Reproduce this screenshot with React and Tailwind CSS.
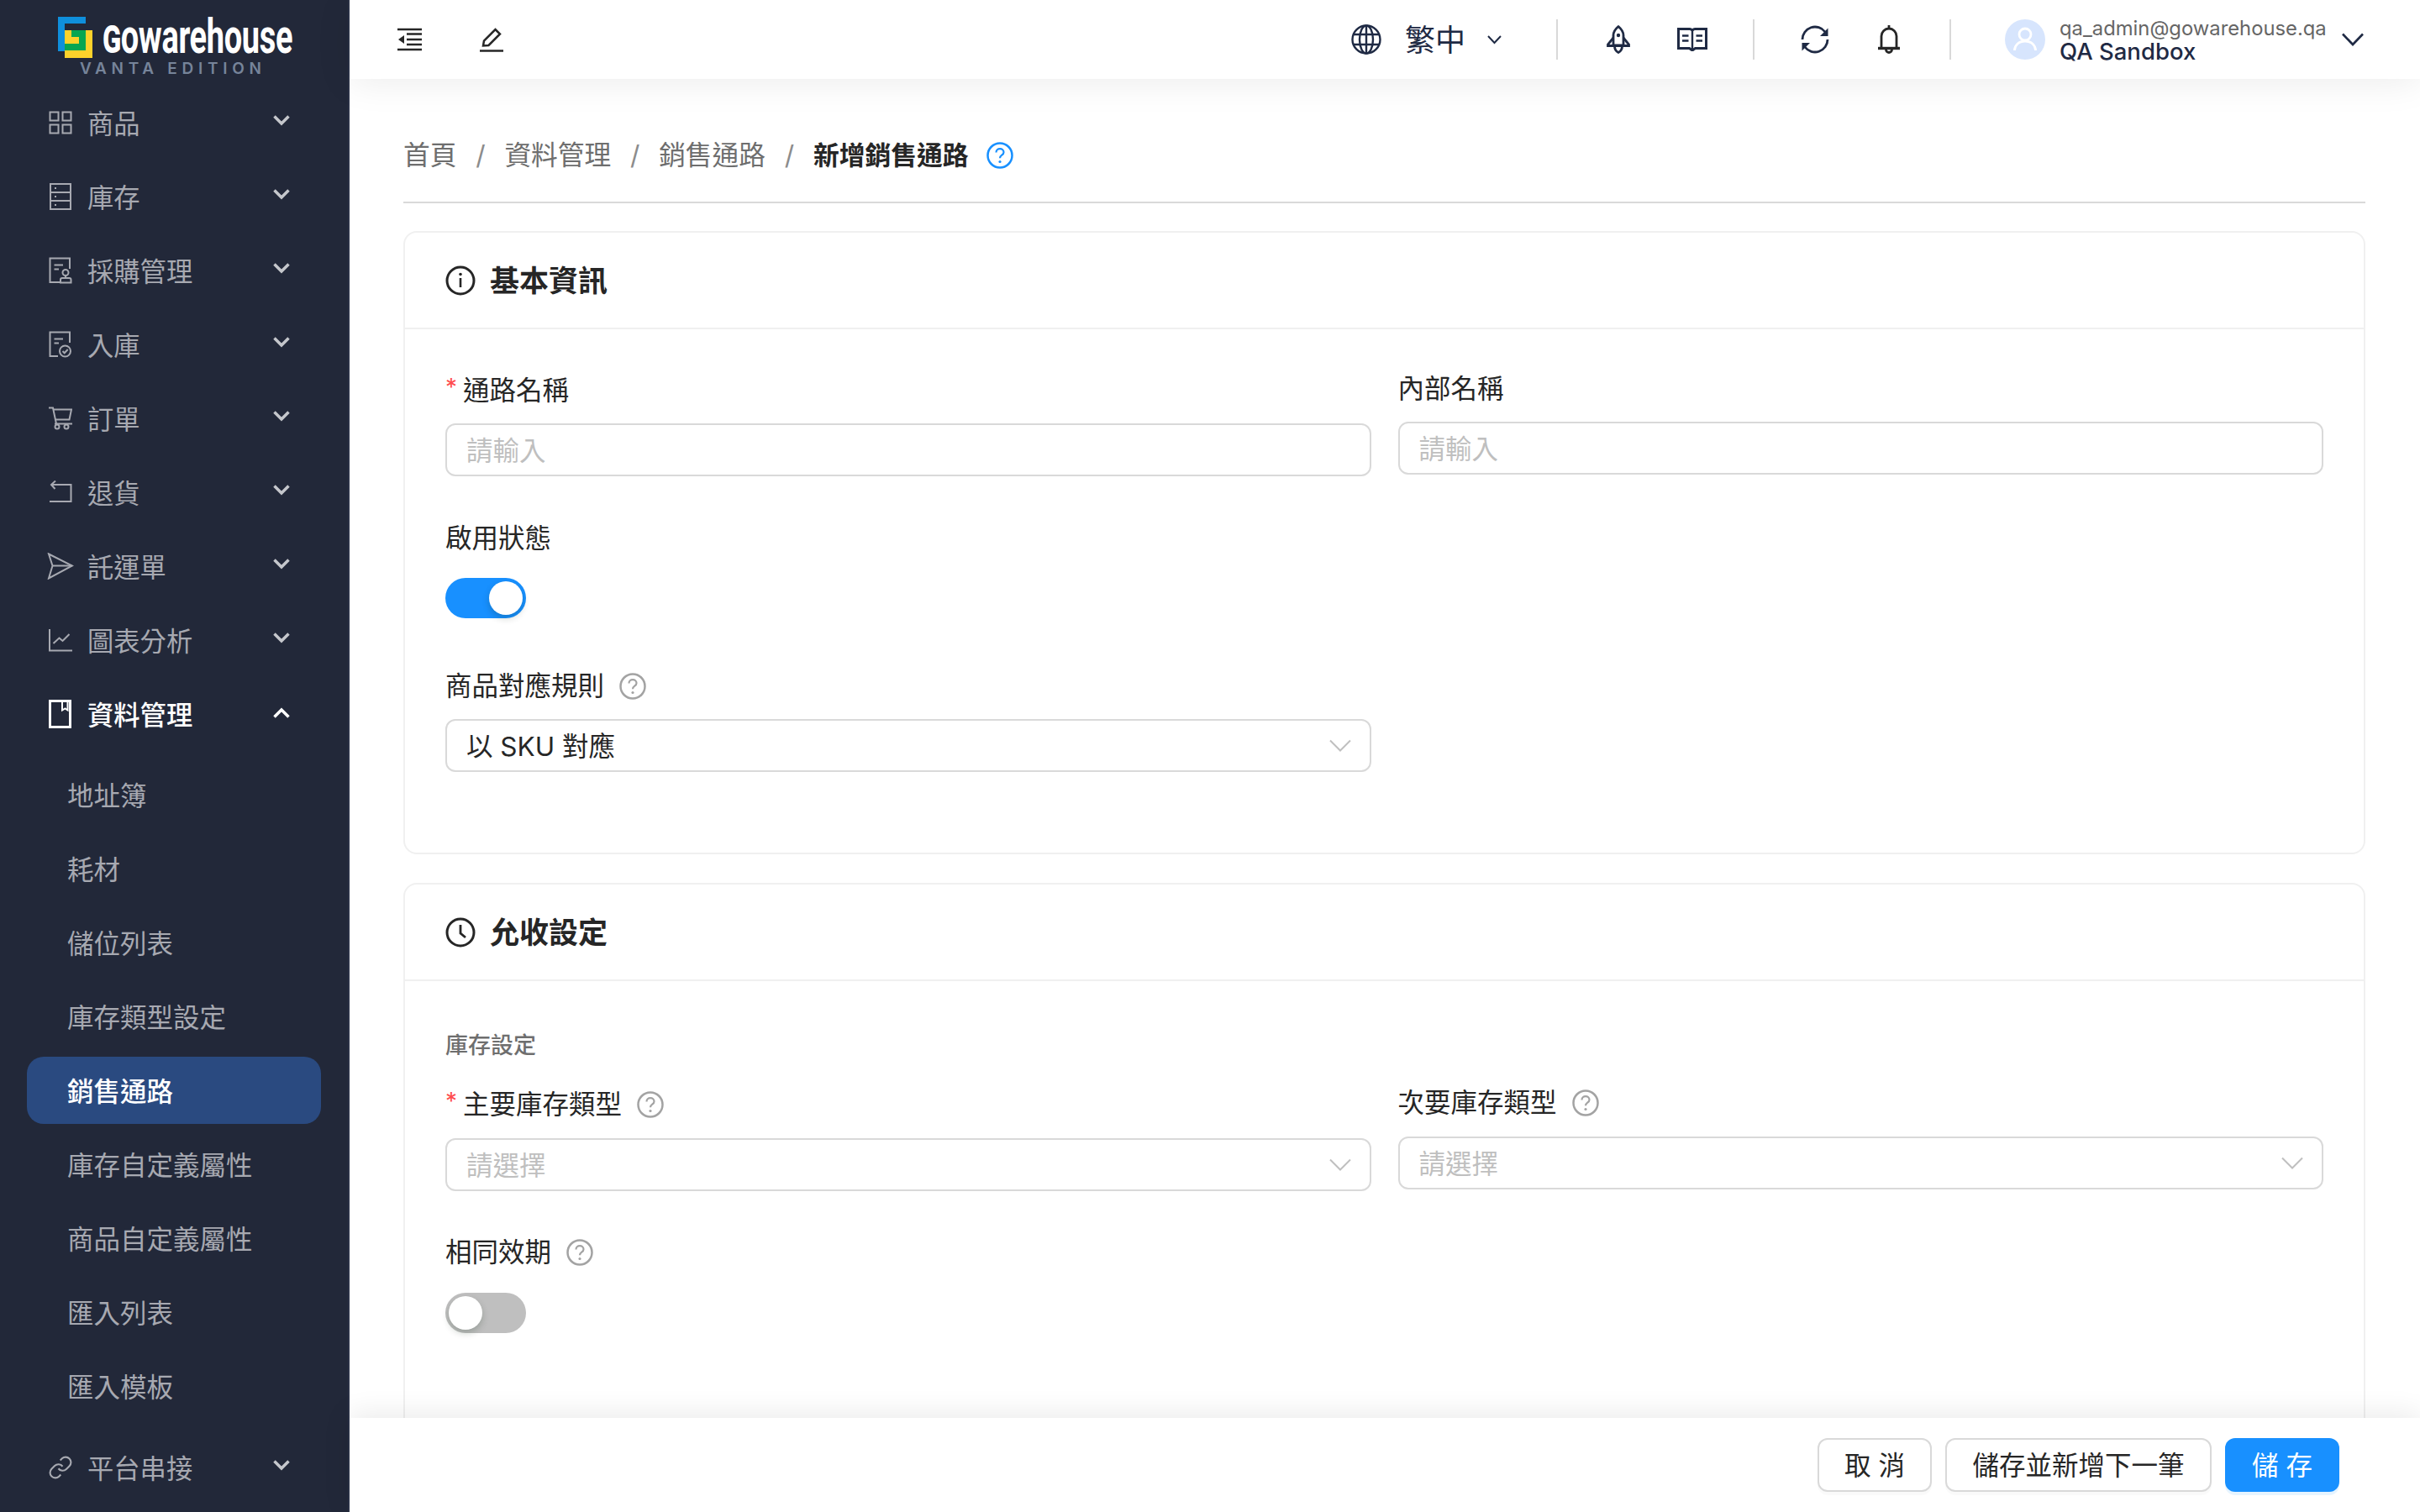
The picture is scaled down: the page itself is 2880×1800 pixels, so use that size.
import React from "react";

const S = ({ w, h, vb, children, sw = 2, className = "" }) => (
  <svg width={w} height={h} viewBox={vb || `0 0 ${w} ${h}`} fill="none" stroke="currentColor" strokeWidth={sw} className={"shrink-0 " + className}>
    {children}
  </svg>
);

const icons = {
  grid: (
    <S w={28} h={28}>
      <rect x="1.5" y="1.5" width="10" height="10" /><rect x="16.5" y="1.5" width="10" height="10" />
      <rect x="1.5" y="16.5" width="10" height="10" /><rect x="16.5" y="16.5" width="10" height="10" />
    </S>
  ),
  server: (
    <S w={28} h={32}>
      <rect x="2" y="1" width="24" height="30" /><path d="M2 11h24M2 21h24" />
      <path d="M7 6h2M7 16h2M7 26h2" />
    </S>
  ),
  stamp: (
    <S w={28} h={32}>
      <path d="M13 30H1.5V1.500H25V14" /><path d="M6.500 9.500H17M6.500 14.500H12" />
      <circle cx="20" cy="18.500" r="3.500" /><path d="M20 22v2" /><path d="M14 30.500v-3.500a2 2 0 0 1 2-2h8.500a2 2 0 0 1 2 2v3.500z" />
    </S>
  ),
  check: (
    <S w={28} h={32}>
      <path d="M11 30H1.500V1.500H25V14" /><path d="M6.500 9.500H17M6.500 14.500H12" />
      <circle cx="19.500" cy="24" r="6.500" /><path d="M16.500 24l2.200 2.300 4-4.300" />
    </S>
  ),
  cart: (
    <S w={28} h={28}>
      <path d="M0 1.500h5l4 19" /><path d="M5.500 3.500H27l-2.500 12H8" /><path d="M7 20.500h21" />
      <circle cx="10" cy="24" r="2.500" /><circle cx="21" cy="24" r="2.500" />
    </S>
  ),
  ret: (
    <S w={28} h={28}>
      <path d="M3 5h23.500v20H1" /><path d="M8 0.500L3 5l4.500 5" />
    </S>
  ),
  send: (
    <S w={32} h={32}>
      <path d="M2 1.500L30 15.500 2 30.500l4.500-15z" /><path d="M6.500 15.500H30" />
    </S>
  ),
  chart: (
    <S w={28} h={28}>
      <path d="M1 1v25.500h27" /><path d="M5.500 18l7-6.500 4 3.500 8-8" />
    </S>
  ),
  book: (
    <S w={28} h={34} sw={3}>
      <rect x="1.500" y="1.500" width="24" height="31" /><path d="M16 1.500v11l3.500-2 3 2v-11" strokeWidth="2" />
    </S>
  ),
  link: (
    <S w={30} h={30} vb="0 0 24 24" sw={1.7}>
      <path d="M10 13a5 5 0 0 0 7.540.540l3-3a5 5 0 0 0-7.070-7.070l-1.720 1.710" />
      <path d="M14 11a5 5 0 0 0-7.540-.540l-3 3a5 5 0 0 0 7.070 7.070l1.710-1.710" />
    </S>
  ),
};

const Chevron = ({ up, white }) => (
  <svg width="20" height="14" viewBox="0 0 20 14" fill="none" strokeWidth="3.500" stroke={white ? "#fff" : "#c5c7cc"} className="shrink-0">
    <path d={up ? "M1.500 11.500L10 3l8.500 8.500" : "M1.500 2.500L10 11l8.500-8.500"} />
  </svg>
);

const NavItem = ({ icon, label, open, lift }) => (
  <div className={"flex items-center h-[80px] mb-2 pl-[56px] pr-[69px] text-[31.3px] leading-[44px] " + (open ? "text-white font-medium" : "text-[#a7a9b1]")}>
    <span className="w-[32px] flex justify-center shrink-0">{icon}</span>
    <span className="ml-[16px] pt-[3px] flex-1">{label}</span>
    <span className={lift ? "-mt-[2px]" : "-mt-[6px]"}><Chevron up={open} white={open} /></span>
  </div>
);

const SubItem = ({ label, active }) => (
  <div className={"flex items-center h-[80px] mb-2 ml-[32px] mr-[32px] pl-[48px] pt-[3px] rounded-[20px] text-[31.5px] leading-[44px] " + (active ? "bg-[#2a4a80] text-white font-medium" : "text-[#a7a9b1]")}>
    {label}
  </div>
);

const Help = ({ className = "text-[#a3a3a3]", size = 32 }) => (
  <svg width={size} height={size} viewBox="0 0 32 32" fill="none" stroke="currentColor" strokeWidth="2.500" className={"shrink-0 " + className}>
    <circle cx="16" cy="16" r="14.500" />
    <path d="M11.500 12.500c0-2.600 2-4.300 4.500-4.300s4.500 1.700 4.500 4c0 3.600-4.500 3.400-4.500 7" strokeWidth="2.200" />
    <circle cx="16" cy="23.500" r="1.600" fill="currentColor" stroke="none" />
  </svg>
);

const Label = ({ req, help, children, className = "" }) => (
  <div className={"flex items-center h-[44px] text-[31.5px] leading-[44px] text-[#262626] " + className}>
    {req && <span className="text-[#ff4d4f] text-[28px] w-[21px] -mt-2 leading-[28px]">*</span>}
    <span>{children}</span>
    {help && <span className="ml-[18px] flex"><Help /></span>}
  </div>
);

const Field = ({ text, select, dark }) => (
  <div className={"flex items-center justify-between h-[63px] border-2 border-[#d9d9d9] rounded-[12px] pl-[23px] pr-[22px] bg-white text-[31.5px] leading-[44px] " + (dark ? "text-[#262626]" : "text-[#bfbfbf]")}>
    <span className="pt-[2px]">{text}</span>
    {select && (
      <svg width="26" height="15" viewBox="0 0 26 15" fill="none" stroke="#bfbfbf" strokeWidth="2"><path d="M1 1.500L13 13.500 25 1.500" /></svg>
    )}
  </div>
);

const Toggle = ({ on }) => (
  <div className={"flex items-center w-[96px] h-[48px] rounded-full px-1 " + (on ? "bg-[#1890ff] justify-end" : "bg-[#bfbfbf] justify-start")}>
    <span className="block w-[40px] h-[40px] rounded-full bg-white shadow-[0_4px_8px_rgba(0,35,11,0.2)]" />
  </div>
);

const Card = ({ icon, title, children, className = "" }) => (
  <section className={"border-2 border-[#f0f0f0] rounded-[16px] " + className}>
    <header className="flex items-center h-[115px] border-b-2 border-[#f0f0f0] pl-[48px] text-[35px] leading-[48px] font-semibold text-[#262626]">
      {icon}
      <span className="ml-[17px]">{title}</span>
    </header>
    {children}
  </section>
);

const Crumb = () => <span className="w-[57px] text-center text-[#8c8c8c]">/</span>;

const HeaderIcon = ({ children }) => <span className="flex w-[36px] shrink-0 justify-center text-[#1f2a44]">{children}</span>;
const VDiv = ({ className = "" }) => <span className={"block shrink-0 w-[2px] h-[48px] bg-[#d9d9d9] " + className} />;

export default function App() {
  return (
    <div className="flex h-[1800px] w-[2880px] overflow-hidden bg-white font-['Inter','Noto_Sans_CJK_TC',sans-serif]">
      <aside className="w-[416px] shrink-0 bg-[#222839] border-r-2 border-[#2b3247] overflow-hidden">
        <div className="relative h-[106px] pl-[69px] pt-[20px]">
          <div className="flex items-start">
            <svg width="41" height="49" viewBox="0 0 41 49" className="shrink-0">
              <path d="M0 0h33v8H8v33H0z" fill="#0f8fdc" />
              <path d="M8 16h33v33H8z" fill="#fdd22b" />
              <path d="M16 16h17v24H8v-8h17v-8h-9z" fill="#07a651" />
              <path d="M8 24h17v8H8z" fill="#fdd22b" />
            </svg>
            <span className="ml-[12px] mt-[2px] origin-left scale-x-[0.655] font-['Roboto'] font-bold text-white text-[58px] leading-[42px] tracking-[-0.5px] whitespace-nowrap"><span className="[font-variant-caps:small-caps]">g</span>owarehouse</span>
          </div>
          <div className="absolute left-[95px] top-[71px] text-[19px] leading-[22px] font-semibold tracking-[5.7px] text-[#76849a] whitespace-nowrap">VANTA EDITION</div>
        </div>
        <NavItem icon={icons.grid} label="商品" />
        <NavItem icon={icons.server} label="庫存" />
        <NavItem icon={icons.stamp} label="採購管理" />
        <NavItem icon={icons.check} label="入庫" />
        <NavItem icon={icons.cart} label="訂單" />
        <NavItem icon={icons.ret} label="退貨" />
        <NavItem icon={icons.send} label="託運單" />
        <NavItem icon={icons.chart} label="圖表分析" />
        <NavItem icon={icons.book} label="資料管理" open lift />
        <div className="h-2" />
        <SubItem label="地址簿" />
        <SubItem label="耗材" />
        <SubItem label="儲位列表" />
        <SubItem label="庫存類型設定" />
        <SubItem label="銷售通路" active />
        <SubItem label="庫存自定義屬性" />
        <SubItem label="商品自定義屬性" />
        <SubItem label="匯入列表" />
        <SubItem label="匯入模板" />
        <div className="h-[9px]" />
        <NavItem icon={icons.link} label="平台串接" />
      </aside>

      <main className="flex-1 min-w-0 flex flex-col">
        <div className="relative z-10 flex items-center h-[94px] bg-white shadow-[0_4px_44px_rgba(0,0,0,0.08)] pl-[57px] pr-[67px]">
          <svg width="30" height="28" viewBox="0 0 30 28" fill="none" stroke="#262626" strokeWidth="3" className="shrink-0">
            <path d="M0 2h29M11 14h18M0 26h29M11 7.500h18M11 20h18" strokeWidth="2.500" />
            <path d="M1 14l7-5v10z" fill="#262626" stroke="none" />
          </svg>
          <svg width="30" height="30" viewBox="0 0 30 30" fill="none" stroke="#262626" strokeWidth="2.500" className="ml-[67px] shrink-0">
            <path d="M1 28.500h28" />
            <path d="M5 22.500l1-6L19.500 3l5.500 5.500L11.500 22z" />
          </svg>
          <div className="flex-1" />
          <HeaderIcon>
            <svg width="36" height="36" viewBox="0 0 36 36" fill="none" stroke="currentColor" strokeWidth="2.400">
              <circle cx="18" cy="18" r="16.500" /><ellipse cx="18" cy="18" rx="8" ry="16.500" />
              <path d="M18 1.500v33M2 12h32M2 24h32" />
            </svg>
          </HeaderIcon>
          <span className="ml-[28px] pt-[1px] text-[36px] leading-[48px] text-[#1f2a44]">繁中</span>
          <svg width="17" height="11" viewBox="0 0 17 11" fill="none" stroke="#1f2a44" strokeWidth="2" className="ml-[26px] shrink-0"><path d="M1 1l7.500 8L16 1" /></svg>
          <VDiv className="ml-[65px]" />
          <span className="ml-[54px]">
            <HeaderIcon>
              <svg width="28" height="34" viewBox="0 0 28 34" fill="none" stroke="currentColor" strokeWidth="2.800">
                <path d="M14 1.500c3.500 3 6 6.500 6 10.500v12H8V12c0-4 2.500-7.500 6-10.500z" strokeLinejoin="round" />
                <path d="M8 15l-6.500 8v1.500h25V23L20 15" />
                <path d="M9.500 24.500c0 4 2.500 7 4.500 8 2-1 4.500-4 4.500-8" />
                <circle cx="14" cy="12" r="2.200" fill="currentColor" stroke="none" />
              </svg>
            </HeaderIcon>
          </span>
          <span className="ml-[52px]">
            <HeaderIcon>
              <svg width="36" height="28" viewBox="0 0 36 28" fill="none" stroke="currentColor" strokeWidth="3">
                <path d="M1.500 1.500h13c1.800 0 3.500 1 3.500 2.500 0-1.500 1.700-2.500 3.500-2.500h13v23h-13L18 27l-3.500-2.500h-13z" />
                <path d="M18 4v22" strokeWidth="2.400" /><path d="M6 9.500h7.500M6 15.500h7.500M22.500 9.500H30M22.500 15.500H30" strokeWidth="2.600" />
              </svg>
            </HeaderIcon>
          </span>
          <VDiv className="ml-[54px]" />
          <span className="ml-[54px]">
            <HeaderIcon>
              <svg width="34" height="34" viewBox="0 0 34 34" fill="none" stroke="currentColor" strokeWidth="2.800">
                <path d="M2 17A15 15 0 0 1 29 8" /><path d="M32 17A15 15 0 0 1 5 26" />
                <path d="M32.500 3.500v9.500H23z" fill="currentColor" stroke="none" />
                <path d="M1.500 30.500V21H11z" fill="currentColor" stroke="none" />
              </svg>
            </HeaderIcon>
          </span>
          <span className="ml-[52px]">
            <HeaderIcon>
              <svg width="28" height="36" viewBox="0 0 28 36" fill="none" stroke="#262626" strokeWidth="2.800">
                <path d="M14 1v3.500" /><path d="M5 28V14a9 9 0 0 1 18 0v14" />
                <path d="M1 28.500h26" strokeWidth="3.400" /><path d="M10.500 30a3.500 3.500 0 0 0 7 0" />
              </svg>
            </HeaderIcon>
          </span>
          <VDiv className="ml-[54px]" />
          <span className="ml-[64px] flex shrink-0 items-center justify-center w-[48px] h-[48px] rounded-full bg-[#d7e5fd] overflow-hidden">
            <svg width="28" height="30" viewBox="0 0 28 30" fill="none" stroke="#fff" strokeWidth="2.800">
              <circle cx="14" cy="9" r="7" /><path d="M1.500 28c0-6 5-11 12.500-11s12.500 5 12.500 11" />
            </svg>
          </span>
          <div className="ml-[17px] flex flex-col w-[318px] shrink-0">
            <span className="text-[23.8px] leading-[29px] text-[#666] whitespace-nowrap">qa_admin@gowarehouse.qa</span>
            <span className="text-[27.5px] leading-[27px] font-medium text-[#1f2a44] whitespace-nowrap">QA Sandbox</span>
          </div>
          <svg width="26" height="16" viewBox="0 0 26 16" fill="none" stroke="#1f2a44" strokeWidth="2.600" className="ml-[18px] shrink-0"><path d="M1 1.500L13 14 25 1.500" /></svg>
        </div>

        <div className="flex-1 min-h-0 overflow-hidden pl-[64px] pr-[65px]">
          <nav className="flex items-center h-[44px] mt-[69px] text-[31.7px] leading-[44px] text-[#6e6e6e]">
            <span>首頁</span><Crumb /><span>資料管理</span><Crumb /><span>銷售通路</span><Crumb />
            <span className="text-[30.8px] font-semibold text-[#262626]">新增銷售通路</span>
            <span className="ml-[21px] flex"><Help className="text-[#1890ff]" /></span>
          </nav>
          <div className="h-[2px] bg-[#d9d9d9] mt-[33px]" />

          <Card
            className="mt-[33px]"
            icon={<svg width="36" height="36" viewBox="0 0 36 36" fill="none" stroke="#262626" strokeWidth="3"><circle cx="18" cy="18" r="16" /><path d="M18 15v11" strokeWidth="2.600" /><circle cx="18" cy="10.500" r="1.800" fill="#262626" stroke="none" /></svg>}
            title="基本資訊"
          >
            <div className="px-[48px] pt-[49px] pb-[96px]">
              <div className="grid grid-cols-2 gap-x-[32px]">
                <div className="mt-[2px]">
                  <Label req>通路名稱</Label>
                  <div className="mt-[17px]"><Field text="請輸入" /></div>
                </div>
                <div>
                  <Label>內部名稱</Label>
                  <div className="mt-[17px]"><Field text="請輸入" /></div>
                </div>
              </div>
              <Label className="mt-[52px]">啟用狀態</Label>
              <div className="mt-[25px]"><Toggle on /></div>
              <Label help className="mt-[59px]">商品對應規則</Label>
              <div className="mt-[17px] w-[1102px]"><Field text="以 SKU 對應" select dark /></div>
            </div>
          </Card>

          <Card
            className="mt-[34px] pb-[200px]"
            icon={<svg width="36" height="36" viewBox="0 0 36 36" fill="none" stroke="#262626" strokeWidth="3"><circle cx="18" cy="18" r="16" /><path d="M18 9v10l6 5" strokeWidth="2.800" /></svg>}
            title="允收設定"
          >
            <div className="px-[48px] pt-[57px]">
              <div className="h-[40px] text-[27px] leading-[40px] font-medium text-[#6e6e6e]">庫存設定</div>
              <div className="grid grid-cols-2 gap-x-[32px] mt-[26px]">
                <div className="mt-[2px]">
                  <Label req help>主要庫存類型</Label>
                  <div className="mt-[18px]"><Field text="請選擇" select /></div>
                </div>
                <div>
                  <Label help>次要庫存類型</Label>
                  <div className="mt-[18px]"><Field text="請選擇" select /></div>
                </div>
              </div>
              <Label help className="mt-[51px]">相同效期</Label>
              <div className="mt-[26px]"><Toggle /></div>
            </div>
          </Card>
        </div>

        <footer className="relative z-10 flex justify-end gap-[16px] h-[112px] pt-[24px] pr-[96px] bg-white shadow-[0_-4px_32px_rgba(0,0,0,0.09)] text-[31.5px] leading-[44px]">
          <button className="w-[136px] h-[64px] pt-[2px] rounded-[12px] border-2 border-[#d9d9d9] bg-white text-[#262626] shadow-[0_4px_0_rgba(0,0,0,0.02)]">取 消</button>
          <button className="w-[317px] h-[64px] pt-[2px] rounded-[12px] border-2 border-[#d9d9d9] bg-white text-[#262626] shadow-[0_4px_0_rgba(0,0,0,0.02)]">儲存並新增下一筆</button>
          <button className="w-[136px] h-[64px] pt-[2px] rounded-[12px] bg-[#1890ff] text-white shadow-[0_4px_0_rgba(5,145,255,0.1)]">儲 存</button>
        </footer>
      </main>
    </div>
  );
}
